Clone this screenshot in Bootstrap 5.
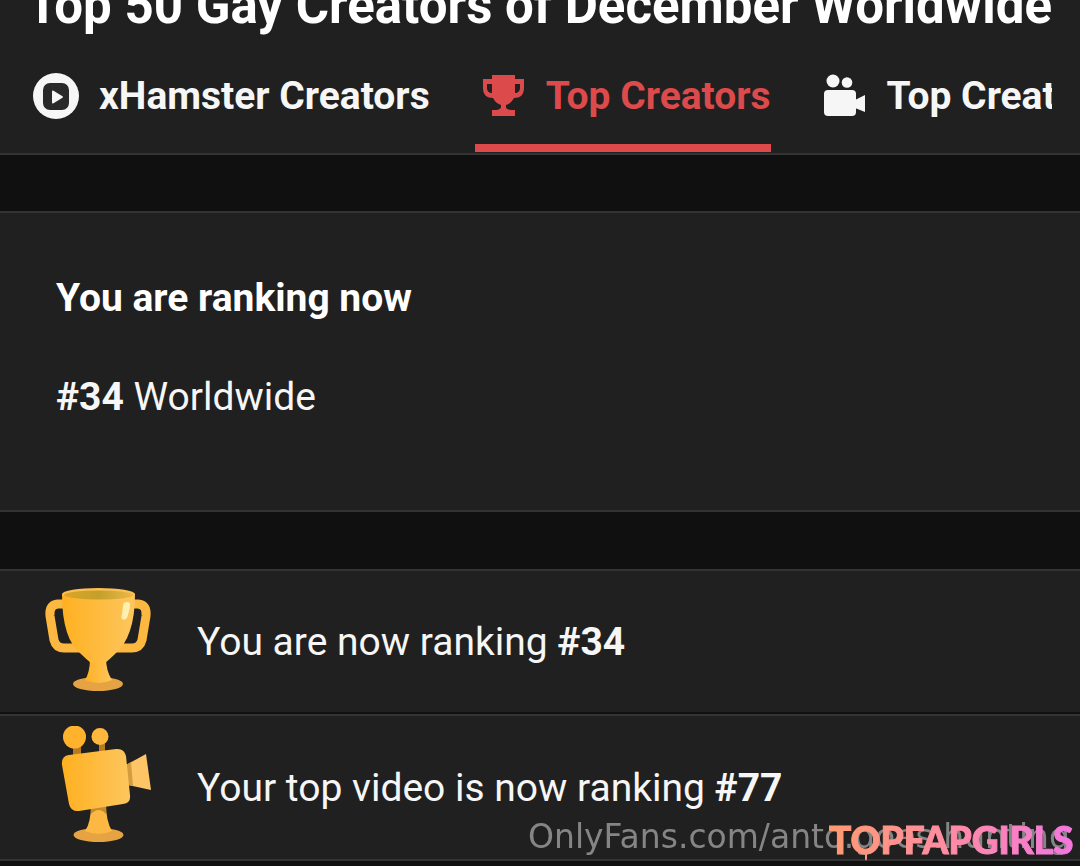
<!DOCTYPE html>
<html lang="en" data-bs-theme="dark">
<head>
<meta charset="utf-8">
<meta name="viewport" content="width=device-width, initial-scale=1">
<title>Top Creators</title>
<link href="https://cdn.jsdelivr.net/npm/bootstrap@5.3.0/dist/css/bootstrap.min.css" rel="stylesheet">
<style>
  body { background: #101010; color: #f6f6f6; font-family: Roboto, sans-serif; font-size: 39px; line-height: 48px; }
  .panel { background: #202020; border: 0 solid #333; }
  .page-head { border-bottom-width: 2px; }
  .page-title { font-size: 51px; line-height: 48px; font-weight: 700; margin: -18px 0 0; padding: 0 27px; }
  .tab-strip { margin: 0 28px 0 0; padding-left: 33px; gap: 45px; overflow: hidden; }
  .tab-strip .nav-link { color: inherit; font-weight: 700; padding: 42px 0 24px; gap: 20px; border-bottom: 8px solid transparent; margin-bottom: 1px; }
  .tab-strip .nav-link.active { color: #dc4a4b; border-color: #dc4a4b; }
  .tab-strip .inset-icon { padding-left: 8px; gap: 22px; }
  .rank-card { margin-top: 56px; border-width: 2px 0; padding: 61px 56px 89px; }
  .rank-card h2 { font-size: 39px; line-height: 48px; font-weight: 700; margin: 0 0 51px; }
  .feed { margin-top: 57px; }
  .feed-row { border-top-width: 2px; min-height: 143px; padding-left: 44px; gap: 44px; }
  .feed-row + .feed-row { margin-top: 2px; border-bottom-width: 2px; min-height: 147px; }
  .mark-url { font: 33px/56px "DejaVu Sans", sans-serif; color: #858585; right: 10px; bottom: 1px; }
  .mark-brand { right: 0; bottom: 0; }
</style>
</head>
<body>
<header class="panel page-head overflow-hidden">
  <h1 class="page-title text-nowrap">Top 50 Gay Creators of December Worldwide</h1>
  <nav class="nav flex-nowrap text-nowrap tab-strip" aria-label="Rankings">
    <a class="nav-link d-flex align-items-center flex-shrink-0" href="#">
      <svg width="46" height="48" viewBox="0 0 46 48" aria-hidden="true"><circle cx="23" cy="24" r="23" fill="#f6f6f6"/><rect x="10" y="11" width="26" height="27" rx="7" fill="#292929"/><path d="M19 19.500v11q0 1.500 1.500.8l9-5.500q1-.8 0-1.600l-9-5.500q-1.500-.7-1.500.8z" fill="#f6f6f6"/></svg>
      xHamster Creators
    </a>
    <a class="nav-link active d-flex align-items-center flex-shrink-0 inset-icon" aria-current="page" href="#">
      <svg width="41" height="48" viewBox="0 0 41 48" fill="currentColor" aria-hidden="true"><path fill-rule="evenodd" d="M9 3h23v4h9v9c0 7-4 10-10 10-2 4-5 6-8 7v2c0 2 3 3 5 3h4v6H9v-6h4c2 0 5-1 5-3v-2c-3-1-6-3-8-7C4 26 0 23 0 16V7h9zM4 12v4c0 3 2 5 5 5v-9zM32 12v9c3 0 5-2 5-5v-4z"/></svg>
      Top Creators
    </a>
    <a class="nav-link d-flex align-items-center flex-shrink-0 inset-icon" href="#">
      <svg width="41" height="48" viewBox="0 0 41 48" fill="currentColor" aria-hidden="true"><circle cx="9" cy="9" r="6.500"/><circle cx="23" cy="10.500" r="5.300"/><rect y="18" width="32" height="26" rx="4"/><path d="M31 28l10-5v17l-10-4z"/></svg>
      Top Creators' Videos
    </a>
  </nav>
</header>
<main>
  <section class="panel rank-card">
    <h2>You are ranking now</h2>
    <p class="m-0"><b>#34</b> Worldwide</p>
  </section>
  <section class="feed">
    <div class="panel feed-row d-flex align-items-center">
      <svg class="flex-shrink-0" width="109" height="112" viewBox="0 0 109 112" aria-hidden="true">
        <defs>
          <linearGradient id="gold"><stop stop-color="#ffb020"/><stop offset="1" stop-color="#fdc65e"/></linearGradient>
          <linearGradient id="rim"><stop stop-color="#dda528"/><stop offset=".5" stop-color="#c4a02a"/><stop offset="1" stop-color="#e9b84a"/></linearGradient>
        </defs>
        <path d="M20 18h-6q-9 1-8 12l4 24q2 8 10 8h17M88 18h6q9 1 8 12l-4 24q-2 8-10 8H71" fill="none" stroke="#fcb840" stroke-width="9"/>
        <ellipse cx="54" cy="98" rx="25" ry="7" fill="#e5a343"/>
        <path d="M46 72h16q0 13 6 22-13 6-27 0 5-8 5-22z" fill="url(#gold)"/>
        <path d="M18 8q0 45 19 60 5 5 10 9h14q5-4 10-9 20-17 20-60z" fill="url(#gold)"/>
        <ellipse cx="54.500" cy="8" rx="36.500" ry="6" fill="#fcc052"/><ellipse cx="54.500" cy="9" rx="34.500" ry="4.500" fill="url(#rim)"/>
        <path d="M79 20q0-4 4-4t3 5-3 11q-2 3-5 1-1-2 0-5z" fill="#fff0b0"/>
      </svg>
      <div>You are now ranking <b>#34</b></div>
    </div>
    <div class="panel feed-row d-flex align-items-center">
      <svg class="flex-shrink-0" width="109" height="124" viewBox="0 5 109 124" aria-hidden="true">
        <path d="M29 20h8v20h-8zM55 20h6v20h-6z" fill="#b77a20"/>
        <circle cx="30.500" cy="16" r="11.500" fill="#ffb32c"/><circle cx="56" cy="15.500" r="8.500" fill="#fdb83d"/>
        <ellipse cx="54.500" cy="114" rx="25" ry="7" fill="#e5a343"/>
        <path d="M47 83h15q0 17 6 27-13 6-27 0 6-8 6-27z" fill="#fcb842"/>
        <path d="M47 84h15v9q-7-8-15 0z" fill="#c58a2c"/>
        <path d="M82 44l20-11 5 36-23-5z" fill="#fdc565"/><path d="M82 44l5-3 2 24-5-1z" fill="#d69b3d"/>
        <path d="M25 34l47-6q8-1 10 7l4 39q1 8-7 9l-44 7q-8 1-10-7L18 44q-1-9 7-10z" fill="url(#gold)"/>
      </svg>
      <div>Your top video is now ranking <b>#77</b></div>
    </div>
  </section>
</main>
<aside class="position-fixed bottom-0 end-0" aria-label="Watermarks">
  <div class="mark-url position-absolute text-nowrap">OnlyFans.com/anto.goes.hunting</div>
  <svg class="mark-brand position-absolute" width="256" height="50" viewBox="0 0 256 50" role="img" aria-label="TOPFAPGIRLS">
    <defs><linearGradient id="pink"><stop stop-color="#ff9b70"/><stop offset=".5" stop-color="#ff8ba5"/><stop offset="1" stop-color="#f276e0"/></linearGradient></defs>
    <text x="5" y="38" font-family="Lato, sans-serif" font-weight="900" font-size="37" fill="url(#pink)" stroke="url(#pink)" stroke-width="1">TOPFAPGIRLS</text>
    <path d="M40 36h3v7q-1 3-2 0v-4z" fill="#ff9780"/>
  </svg>
</aside>
<script src="https://cdn.jsdelivr.net/npm/bootstrap@5.3.0/dist/js/bootstrap.bundle.min.js"></script>
</body>
</html>
